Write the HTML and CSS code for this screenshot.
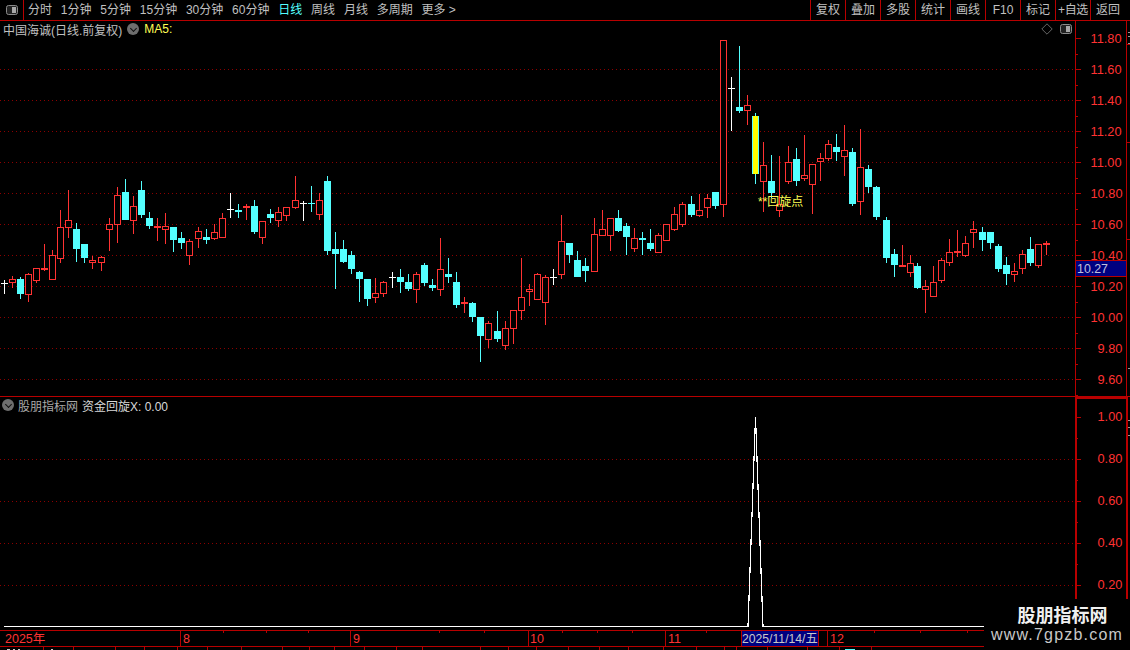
FILE: index.html
```html
<!DOCTYPE html>
<html lang="zh-CN">
<head>
<meta charset="utf-8">
<title>中国海诚 日线</title>
<link rel="stylesheet" href="styles.css">
</head>
<body>
<div class="app">
  <header class="toolbar">
    <div class="toggle-cell">
      <svg class="panel-icon" viewBox="0 0 12 10"><rect x="0.5" y="0.5" width="11" height="9" rx="2" class="panel-icon-frame"/><rect x="6" y="2" width="4" height="6" class="panel-icon-fill"/></svg>
    </div>
    <nav class="periods">
      <span>分时</span><span>1分钟</span><span>5分钟</span><span>15分钟</span><span>30分钟</span><span>60分钟</span>
      <span class="active">日线</span><span>周线</span><span>月线</span><span>多周期</span><span>更多 &gt;</span>
    </nav>
    <div class="actions">
      <span>复权</span><span>叠加</span><span>多股</span><span>统计</span><span>画线</span><span>F10</span><span>标记</span><span class="tight">+自选</span><span>返回</span>
    </div>
  </header>

  <section class="pane pane-price">
    <svg id="price" class="chart" viewBox="0 21 1130 376" width="1130" height="376" shape-rendering="crispEdges"></svg>
    <div class="legend legend-price">
      <span>中国海诚(日线.前复权)</span>
      <i class="chevron"></i>
      <span class="ma">MA5:</span>
    </div>
    <div class="tools">
      <svg class="diamond" viewBox="0 0 12 12"><path d="M6 .8 11.2 6 6 11.2 .8 6Z"/></svg>
      <svg class="panel-icon" viewBox="0 0 12 10"><rect x="0.5" y="0.5" width="11" height="9" rx="2" class="panel-icon-frame"/><rect x="6" y="2" width="4" height="6" class="panel-icon-fill"/></svg>
    </div>
  </section>

  <section class="pane pane-indicator">
    <svg id="indicator" class="chart" viewBox="0 397 1130 233" width="1130" height="233" shape-rendering="crispEdges"></svg>
    <div class="legend legend-indicator">
      <i class="chevron"></i>
      <span class="dim">股朋指标网</span>
      <span class="bright">资金回旋X: 0.00</span>
    </div>
  </section>

  <svg id="time" class="chart" viewBox="0 630 1130 20" width="1130" height="20" shape-rendering="crispEdges"></svg>

  <aside class="watermark">
    <strong>股朋指标网</strong>
    <span>www.7gpzb.com</span>
  </aside>
</div>
<script src="chart.js"></script>
</body>
</html>
```
FILE: styles.css
```css
* { box-sizing: border-box; }
html, body { margin: 0; height: 100%; background: #000; }
body { overflow: hidden; font: 12px "Liberation Sans", "Noto Sans CJK SC", sans-serif; color: #c8c8c8; }
.app { position: relative; width: 1130px; height: 650px; display: flex; flex-direction: column; background: #000; }

.toolbar { display: flex; align-items: stretch; height: 21px; flex: none; border-bottom: 1px solid #b80000; line-height: 20px; }
.toggle-cell { width: 24px; display: flex; align-items: center; justify-content: center; border-right: 1px solid #b80000; }
.periods { display: flex; gap: 8.8px; padding-left: 4px; flex: 1; font-size: 12px; color: #c0c0c0; }
.periods .active { color: #54ffff; }
.actions { display: flex; padding-right: 5px; }
.actions span { width: 35px; text-align: center; border-left: 1px solid #b80000; color: #c0c0c0; }
.actions .tight { letter-spacing: -0.4px; white-space: nowrap; }

.panel-icon { width: 12px; height: 10px; display: block; }
.panel-icon-frame { fill: #222; stroke: #8a8a8a; }
.panel-icon-fill { fill: #a8a8a8; }

.pane { position: relative; flex: none; }
.chart { display: block; flex: none; }

.legend { position: absolute; display: flex; align-items: center; white-space: nowrap; height: 16px; }
.legend-price { left: 3px; top: 0; gap: 5px; color: #c0c0c0; }
.legend-indicator { left: 2px; top: 0; gap: 4px; }
.legend .ma { color: #ffff54; }
.legend .dim { color: #a8a8a8; }
.legend .bright { color: #d8d8d8; }
.chevron { width: 12px; height: 12px; border-radius: 50%; background: #6e6e6e; position: relative; display: block; flex: none; }
.chevron::after { content: ""; position: absolute; left: 3.5px; top: 2.5px; width: 4px; height: 4px; border: solid #111; border-width: 0 1px 1px 0; transform: rotate(45deg); }

.tools { position: absolute; right: 58px; top: 2px; display: flex; align-items: center; gap: 7px; }
.diamond { width: 12px; height: 12px; display: block; fill: none; stroke: #666; }

.axis-text { font: 12.8px "Liberation Sans", sans-serif; fill: #ff3232; }
.time-text { font: 12.5px "Liberation Sans", "Noto Sans CJK SC", sans-serif; fill: #ff3232; }
.last-text { font: 12.4px "Liberation Sans", sans-serif; fill: #c0c0dc; }
.date-text { font: 12.2px "Liberation Sans", "Noto Sans CJK SC", sans-serif; fill: #c8c8c8; }
.signal-text { font: 12px "Liberation Sans", "Noto Sans CJK SC", sans-serif; fill: #ffff54; }

.watermark { position: absolute; right: 0; bottom: 0; width: 146px; height: 51px; background: #000; display: flex; flex-direction: column; align-items: center; color: #f0f0f0; }
.watermark strong { font: bold 18px/22px "Noto Sans CJK SC", sans-serif; margin-top: 4px; margin-left: 11px; }
.watermark span { font: 16px/20px "Liberation Sans", sans-serif; letter-spacing: 1.2px; color: #c8c8c8; }
```
FILE: chart.js
```js
var NS = 'http://www.w3.org/2000/svg';
var RED = '#ff3232', CYAN = '#54ffff', AXIS = '#b80000', GRID = '#8c0000';

function add(svg, tag, attrs, text) {
  var el = document.createElementNS(NS, tag);
  for (var k in attrs) el.setAttribute(k, attrs[k]);
  if (text) el.textContent = text;
  svg.appendChild(el);
  return el;
}
function box(svg, x, y, w, h, fill) { add(svg, 'rect', { x: x, y: y, width: w, height: h, fill: fill }); }
function dotted(svg, y, x2) { for (var x = 0; x < x2; x += 4) box(svg, x, y, 1, 1, GRID); }

/* kind, x, high, low, bodyTop, bodyBottom */
var candles = [
['w',4,280,294,283,283],['r',12,276,288,279,283],['c',20,277,299,279,294],['r',28,273,302,274,295],
['r',36,268,283,268,281],['f',44,244,271,268,270],['r',52,250,280,255,280],['r',60,210,263,227,259],
['r',68,190,238,220,228],['c',76,223,262,229,249],['c',84,244,263,244,258],['r',92,256,269,260,263],
['r',101,256,271,257,263],['r',109,218,251,224,230],['r',117,187,243,195,225],['c',125,179,220,192,220],
['r',133,196,234,206,221],['c',141,181,218,190,215],['c',149,212,229,218,226],['f',157,218,241,226,228],
['r',165,213,244,226,230],['c',173,227,252,227,240],['c',181,232,249,238,243],['r',189,239,265,241,256],
['r',198,227,248,231,239],['c',206,229,244,237,240],['r',214,224,240,232,239],['r',222,213,238,218,238],
['w',230,193,218,209,209],['c',238,204,218,210,212],['f',246,204,220,206,208],['c',254,200,234,206,232],
['r',262,221,244,221,238],['c',270,209,223,214,218],['r',278,207,227,212,221],['r',286,207,221,207,216],
['r',295,176,209,200,208],['w',303,201,221,203,203],['c',311,186,212,203,204],['r',319,193,220,200,215],
['c',327,176,255,181,251],['c',335,232,289,249,254],['c',343,240,263,249,262],['c',351,251,274,255,269],
['c',359,271,302,272,279],['c',367,279,306,279,299],['r',375,278,303,293,298],['r',383,281,297,282,294],
['w',392,272,288,277,277],['c',400,269,293,277,282],['c',408,274,291,282,289],['r',416,272,303,274,290],
['c',424,263,286,265,283],['c',432,279,291,285,288],['r',440,238,296,269,290],['c',448,258,283,274,277],
['c',456,272,308,282,305],['f',464,297,313,302,304],['c',472,302,322,303,317],['c',480,317,362,317,336],
['r',488,321,348,323,340],['c',497,311,342,331,339],['r',505,321,350,328,346],['r',513,310,344,310,329],
['r',521,258,320,297,311],['r',529,284,306,289,292],['r',537,273,300,274,300],['r',545,275,325,277,303],
['w',553,269,285,277,277],['r',561,215,279,241,275],['c',569,243,263,243,255],['c',577,251,277,260,277],
['c',585,258,282,266,271],['r',594,218,272,234,272],['r',602,210,236,229,236],['r',610,218,251,218,236],
['c',618,210,232,218,231],['c',626,223,255,226,237],['r',634,228,252,238,249],['c',642,232,255,238,240],
['c',650,229,251,243,249],['r',658,233,253,235,253],['r',666,224,241,224,241],['r',674,207,231,214,230],
['r',682,202,227,204,225],['c',691,196,217,204,215],['r',699,194,217,210,216],['r',707,194,218,198,208],
['c',715,192,209,192,206],['r',723,40,217,40,205],['w',731,77,131,88,88],['c',739,46,113,107,111],
['r',747,95,125,105,111],['c',755,113,184,116,174],['r',763,142,212,165,182],['c',771,155,198,181,193],
['r',779,156,217,204,211],['r',788,146,184,162,182],['c',796,148,186,159,181],['r',804,135,181,175,179],
['r',812,164,214,164,185],['r',820,153,181,158,162],['r',828,140,161,144,159],['c',836,134,161,147,152],
['r',844,125,176,150,157],['c',852,148,206,152,204],['r',860,129,215,167,202],['c',868,165,193,169,187],
['c',876,186,220,187,217],['c',886,217,263,220,258],['c',894,249,277,254,265],['f',902,245,267,265,267],
['r',910,255,277,263,273],['c',917,263,289,266,288],['r',925,280,313,286,290],['r',933,266,297,282,297],
['r',941,258,283,260,281],['r',949,239,266,252,263],['f',957,230,257,251,253],['r',965,236,257,243,256],
['r',973,221,248,229,233],['c',982,227,251,232,240],['c',990,232,249,232,243],['c',998,244,272,246,269],
['c',1006,257,285,265,274],['r',1014,263,282,271,275],['r',1022,250,274,254,269],['c',1030,237,266,249,263],
['r',1038,244,268,244,266],['f',1046,241,255,243,245]
];

function drawCandles(svg) {
  candles.forEach(function (c) {
    var k = c[0], x = c[1], hi = c[2], lo = c[3], top = c[4], bot = c[5];
    if (k === 'w') {
      box(svg, x, hi, 1, lo - hi, '#fff');
      box(svg, x - 3, top, 7, 1, '#fff');
    } else if (k === 'c') {
      box(svg, x, hi, 1, lo - hi, CYAN);
      box(svg, x - 3, top, 7, bot - top, CYAN);
    } else if (k === 'f') {
      box(svg, x, hi, 1, lo - hi, RED);
      box(svg, x - 3, top, 7, bot - top, RED);
    } else {
      box(svg, x, hi, 1, lo - hi, RED);
      box(svg, x - 3, top, 7, bot - top, RED);
      box(svg, x - 2, top + 1, 5, bot - top - 2, '#000');
    }
  });
  box(svg, 753, 116, 5, 58, '#ffff00');
}

function ticks(svg, first, step, count, thick) {
  for (var i = 0; i < count; i++) {
    box(svg, 1075, first + i * step, 6, thick, AXIS);
    box(svg, 1075, first + i * step + step / 2, 3, 1, AXIS);
  }
}

var price = document.getElementById('price');
for (var g = 69; g <= 379; g += 31) dotted(price, g, 1075);
drawCandles(price);
add(price, 'text', { x: 758, y: 206, 'class': 'signal-text' }, '**回旋点');
box(price, 1075, 21, 1, 376, AXIS);
box(price, 1126, 21, 1, 376, AXIS);
ticks(price, 38, 31, 12, 1);
['11.80','11.60','11.40','11.20','11.00','10.80','10.60','10.40','10.20','10.00','9.80','9.60'].forEach(function (t, i) {
  add(price, 'text', { x: t.length > 4 ? 1090.5 : 1097.5, y: 43 + i * 31, 'class': 'axis-text' }, t);
});
box(price, 1075, 260, 52, 17, AXIS);
box(price, 1076, 261, 50, 15, '#000080');
add(price, 'text', { x: 1077, y: 273, 'class': 'last-text' }, '10.27');
[32, 36, 43, 368].forEach(function (y) { box(price, 1128, y, 2, 1, '#999'); });
[44, 142, 239].forEach(function (y) { box(price, 1127, y, 3, 1, AXIS); });
box(price, 0, 396, 1130, 1, AXIS);

var ind = document.getElementById('indicator');
[459, 501, 543, 585].forEach(function (y) { dotted(ind, y, 1075); });
add(ind, 'polyline', { points: '4,626.5 748,626.5 755.5,417 763,626.5 1075,626.5', fill: 'none', stroke: '#fff', 'stroke-width': 1.2 });
box(ind, 1075, 397, 2, 233, AXIS);
box(ind, 1126, 397, 2, 233, AXIS);
box(ind, 1075, 397, 52, 2, AXIS);
ticks(ind, 417, 42, 5, 1);
['1.00','0.80','0.60','0.40','0.20'].forEach(function (t, i) {
  add(ind, 'text', { x: 1097.5, y: 421 + i * 42, 'class': 'axis-text' }, t);
});
[420, 427, 435].forEach(function (y) { box(ind, 1128, y, 2, 1, '#999'); });

var time = document.getElementById('time');
box(time, 0, 630, 1130, 1, AXIS);
box(time, 0, 646, 1130, 1, AXIS);
[180, 350, 528, 665, 827].forEach(function (x) { box(time, x, 630, 1, 16, AXIS); });
[223, 266, 308, 439, 484, 562, 597, 632, 706, 874, 920, 967].forEach(function (x) { box(time, x, 630, 1, 3, AXIS); });
[43, 73, 115, 144, 177, 207, 241, 282, 309, 334, 364, 396, 422, 480, 508, 536, 568, 599, 628, 663, 696, 724, 736, 767, 807, 839, 871].forEach(function (x) {
  box(time, x, 646, 1, 4, AXIS);
});
[[7, 3], [13, 2], [18, 2], [51, 2], [845, 10]].forEach(function (p) { box(time, p[0], 649, p[1], 1, p[0] > 800 ? CYAN : '#ccc'); });
[['2025年', 5], ['8', 183], ['9', 353], ['10', 530], ['11', 668], ['12', 830]].forEach(function (p) {
  add(time, 'text', { x: p[1], y: 643, 'class': 'time-text' }, p[0]);
});
box(time, 741, 630, 78, 17, AXIS);
box(time, 742, 631, 76, 15, '#000080');
add(time, 'text', { x: 742, y: 643, 'class': 'date-text' }, '2025/11/14/五');
```
